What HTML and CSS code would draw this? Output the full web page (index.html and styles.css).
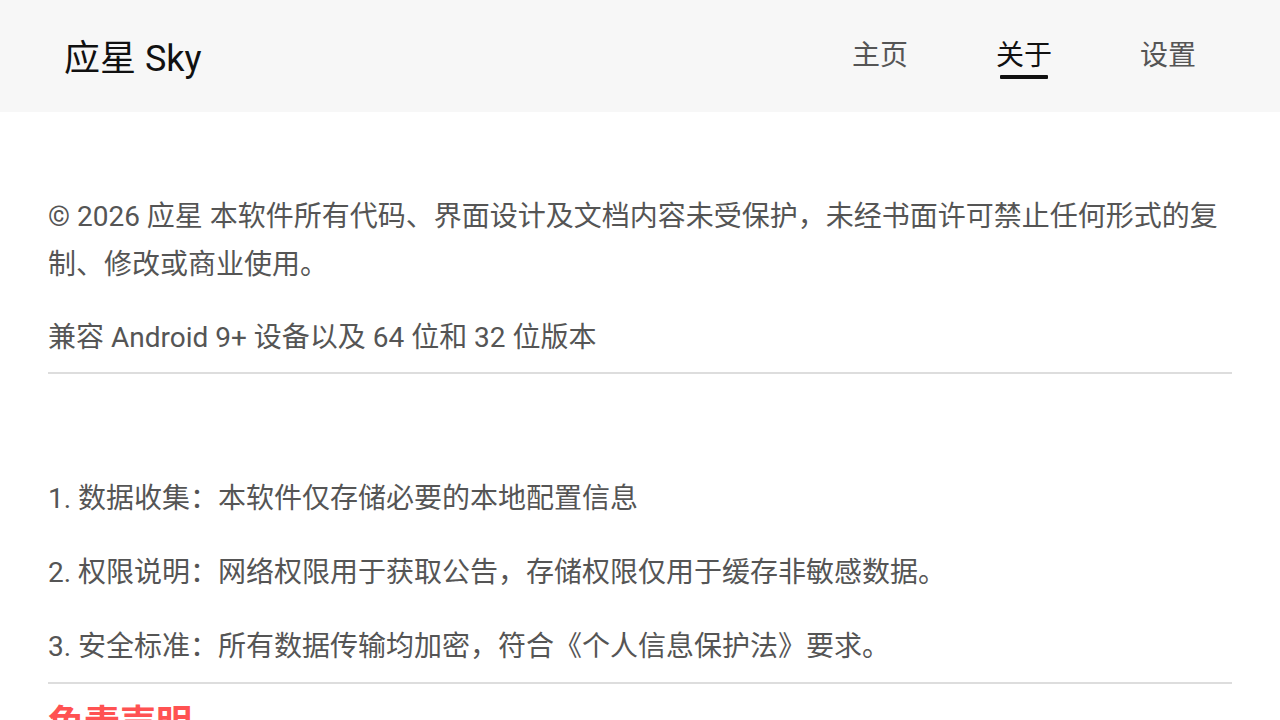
FILE: index.html
```html
<html><head>
<meta charset="utf-8">
<link rel="stylesheet" href="styles.css">
</head>
<body>
  <header class="topbar">
    <div class="brand">应星 Sky</div>
    <nav class="nav">
      <a class="nav-item">主页</a>
      <a class="nav-item active">关于</a>
      <a class="nav-item">设置</a>
    </nav>
  </header>

  <main class="content">
    <section class="block first">
      <p>© 2026 应星 本软件所有代码、界面设计及文档内容未受保护，未经书面许可禁止任何形式的复制、修改或商业使用。</p>
      <p>兼容 Android 9+ 设备以及 64 位和 32 位版本</p>
    </section>

    <section class="block">
      <p>1. 数据收集：本软件仅存储必要的本地配置信息</p>
      <p>2. 权限说明：网络权限用于获取公告，存储权限仅用于缓存非敏感数据。</p>
      <p>3. 安全标准：所有数据传输均加密，符合《个人信息保护法》要求。</p>
    </section>

    <section class="block plain">
      <h2 class="warn">免责声明</h2>
      <p>本软件按“现状”提供，不对使用过程中产生的任何损失承担责任。</p>
    </section>
  </main>
</body></html>
```

FILE: styles.css
```css
:root {
  --text: #555555;
  --dark: #111111;
  --line: #dddddd;
  --bar: #f7f7f7;
  --warn: #ff5252;
}

body {
  margin: 0;
  background: #ffffff;
  color: var(--text);
  font-family: Roboto, "Noto Sans CJK SC", sans-serif;
}

.topbar {
  height: 112px;
  background: var(--bar);
  display: flex;
  align-items: center;
  justify-content: space-between;
  padding: 0 84px 0 64px;
}

.brand {
  font-size: 36px;
  color: var(--dark);
  margin-top: -2px;
}

.nav {
  display: flex;
  gap: 88px;
  align-items: center;
}

.nav-item {
  font-size: 28px;
  color: var(--text);
  position: relative;
  padding-bottom: 2px;
  margin-top: -4px;
}

.nav-item.active {
  color: var(--dark);
}

.nav-item.active:after {
  content: '';
  position: absolute;
  left: 4px;
  right: 4px;
  bottom: -4px;
  height: 4px;
  border-radius: 1px;
  background: var(--dark);
}

.content {
  padding: 81px 48px 0;
}

.block {
  border-bottom: 2px solid var(--line);
  padding: 101px 0 11px;
}

.block.first {
  padding: 0 0 10px;
}

.block.plain {
  border-bottom: none;
  padding: 16px 0 0;
}

.block p {
  margin: 0;
  font-size: 28px;
  line-height: 48px;
}

.block p + p {
  margin-top: 26px;
}

.block.first p + p {
  margin-top: 25px;
}

.warn {
  margin: 0 0 20px;
  font-size: 36px;
  line-height: 48px;
  font-weight: bold;
  color: var(--warn);
}
```
